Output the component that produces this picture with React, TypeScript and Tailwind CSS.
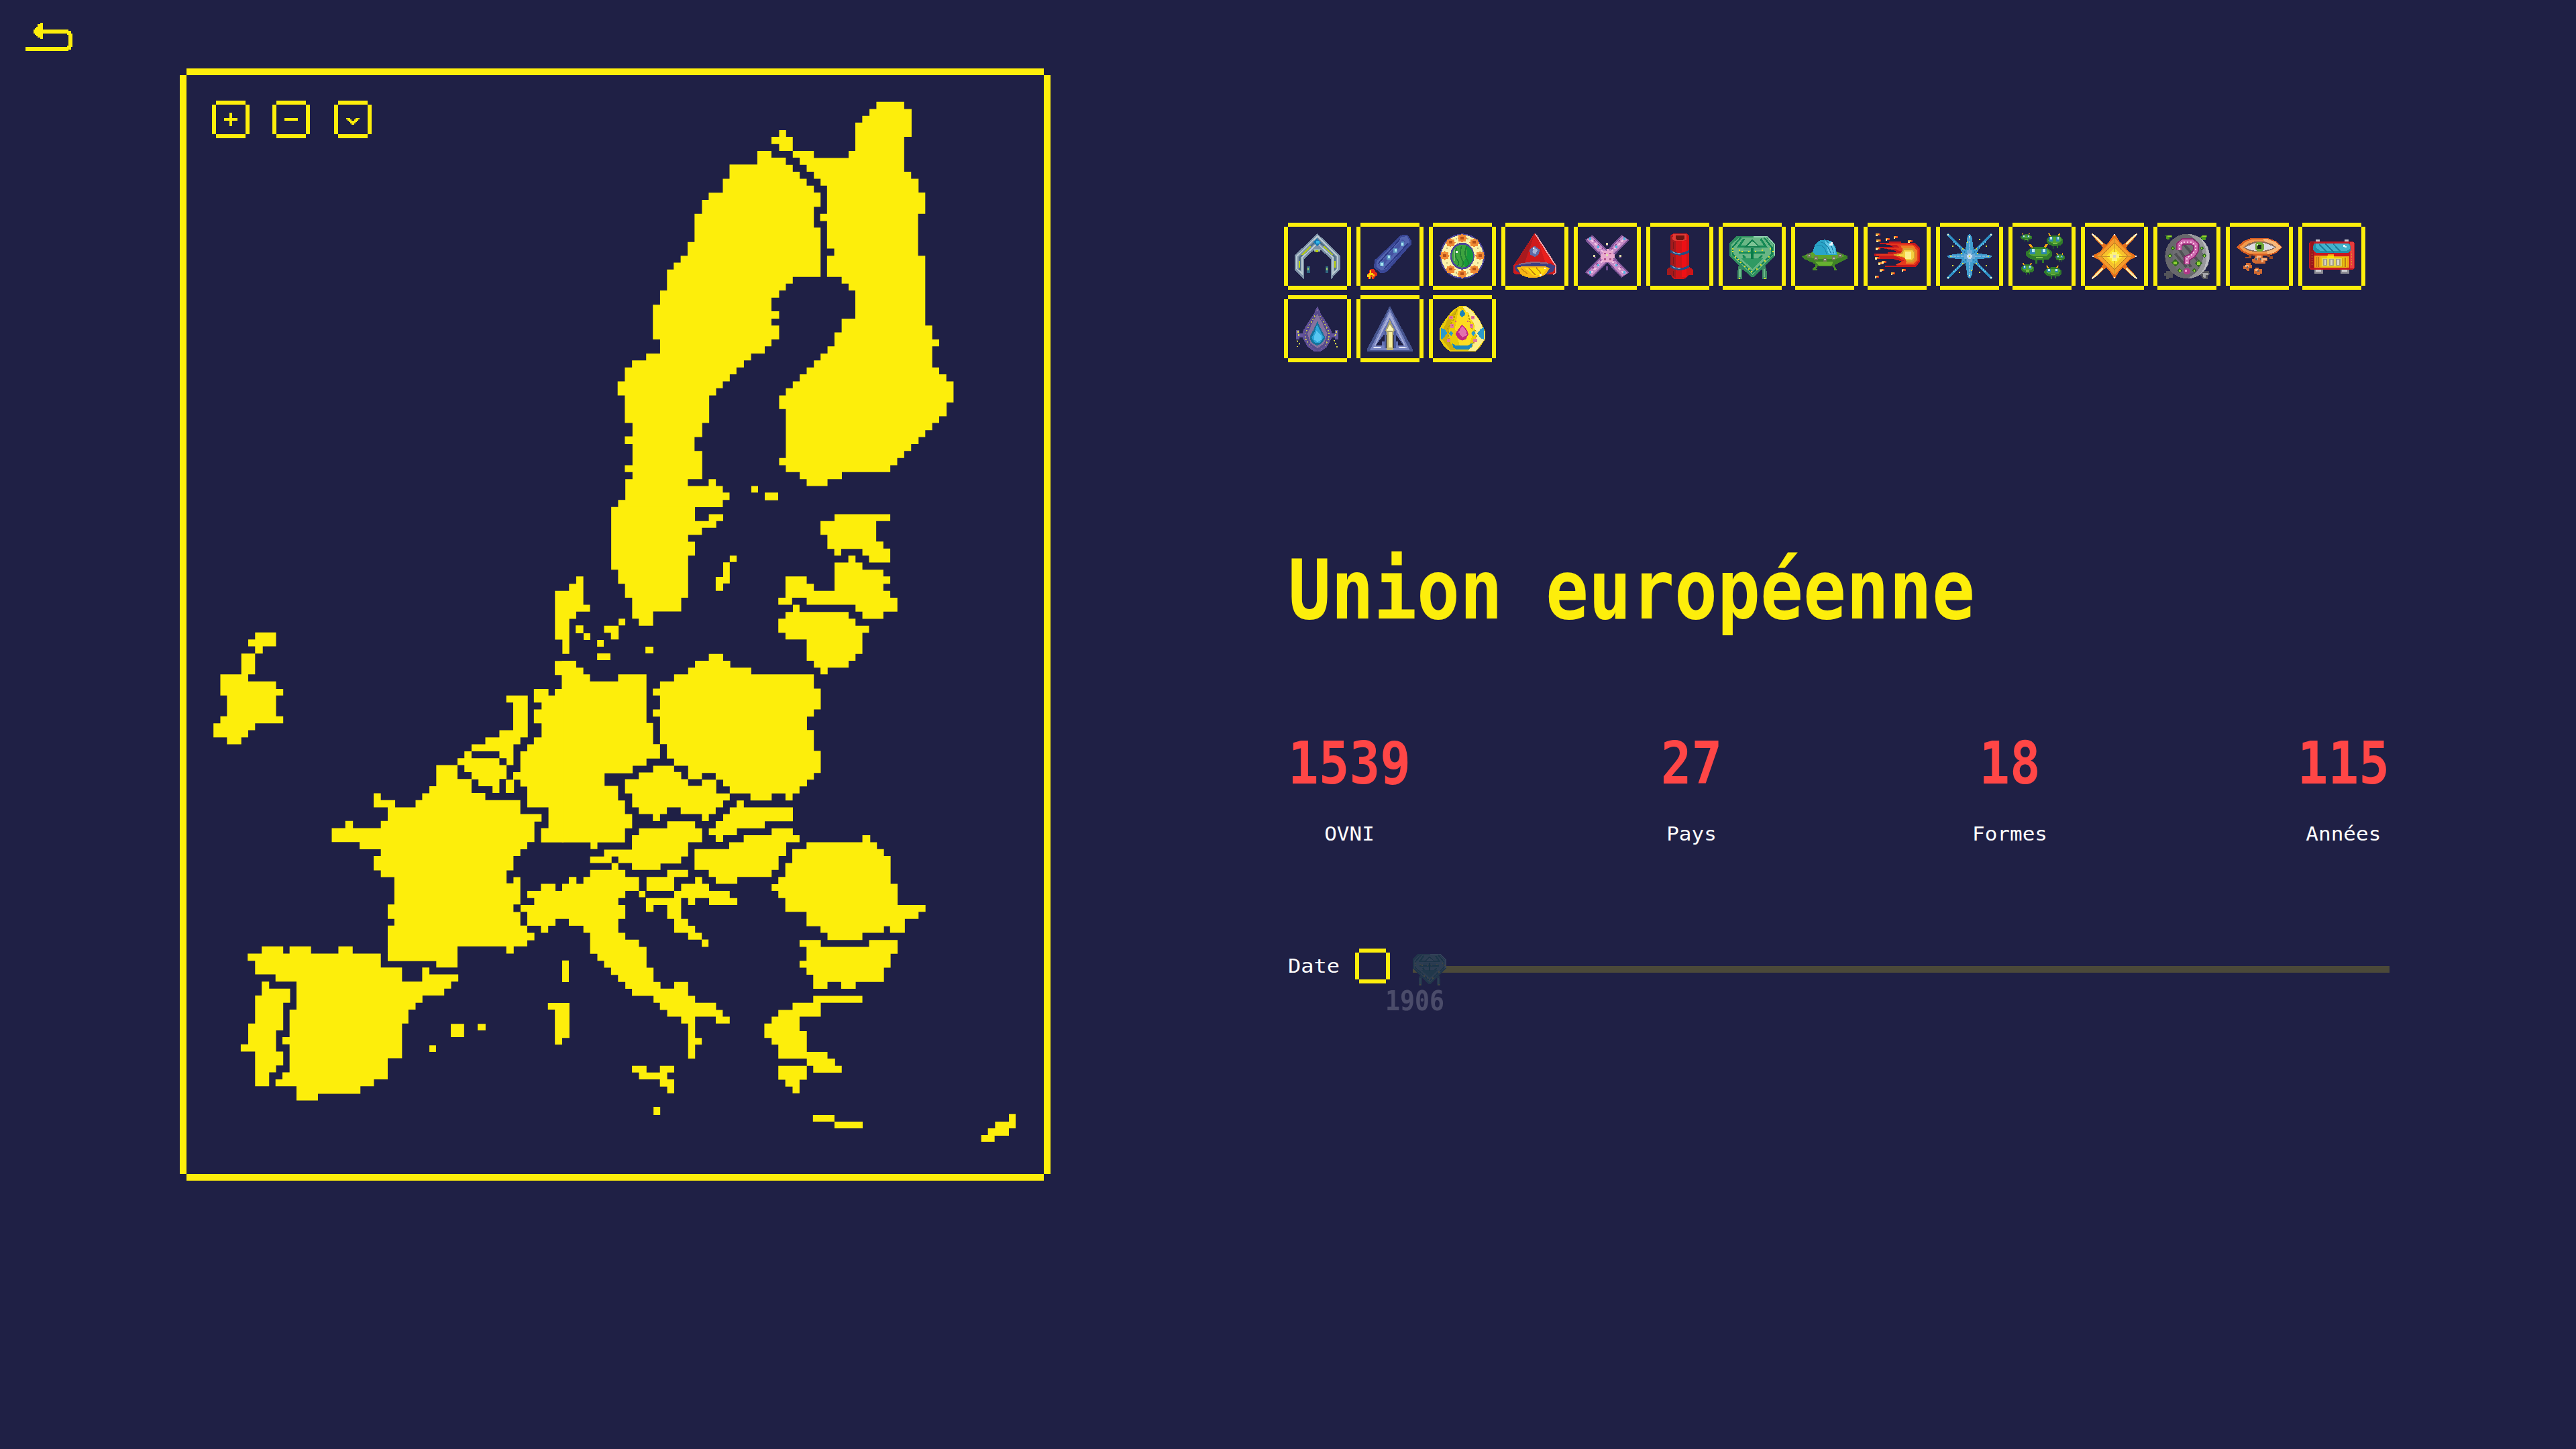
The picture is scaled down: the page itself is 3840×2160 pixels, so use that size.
import type { ReactNode } from "react";

const Y = "#fdee0b";

/* Every land mass is traced in the coordinate frame of its map section. */
const sections = [
  {
    transform: "translate(900 120) scale(.35714 .40816)",
    d: [
      "M641 257H700V282H760V308H789V333H818V359H847V384H877V409H905V461H877V537H905V717H789V742H760V767H732V793H700V843H732V870H700V895H732V946H700V971H672V997H615V1022H585V1048H554V1073H526V1099H497V1124H469V1150H440V1251H411V1302H379V1353H411V1456H351V1481H438V1456H468V1481H497V1505H525V1532H497V1558H379V1564H60V1532H90V1456H120V1430H88V1405H120V1328H88V1300H120V1251H88V1150H58V1099H88V1048H118V1022H177V997H235V946H205V819H235V767H264V690H292V665H321V640H350V590H379V487H410V436H438V410H497V359H525V307H641Z",
      "M732 181H761V206H789V257H732V232H700V206H732Z",
      "M789 257H877V283H1022V257H1050V154H1079V129H1109V104H1138V78H1254V104H1285V206H1254V333H1283V359H1314V409H1342V487H1312V640H1342V895H1371V946H1400V971H1371V1048H1400V1073H1430V1099H1460V1176H1431V1226H1400V1251H1371V1277H1342V1302H1314V1328H1283V1353H1254V1379H1225V1405H1196V1430H994V1456H934V1481H847V1456H818V1430H760V1405H732V1379H760V1200H732V1150H760V1124H789V1099H818V1073H847V1048H877V1022H905V997H934V971H963V920H993V870H1050V767H1022V742H993V717H932V640H962V614H932V513H903V487H932V384H905V359H877V333H847V308H818V282H789Z",
      "M616 1481h28v24h-28ZM672 1505h56v28h-56Z",
    ],
  },
  {
    transform: "translate(800 700) scale(.39541 .35714)",
    d: [
      "M281 156H597V215H649V186H703V215H677V243H623V272H571V301H597V359H571V535H545V592H439V652H385V622H360V535H333V477H307V418H281Z",
      "M728 359H754V386H728ZM703 387H728V475H703V506H675V448H703Z",
      "M1123 186H1333V215H1280V300H1307V330H1333V388H1253V359H1228V331H1148V359H1122V331H1096V272H1070V215H1123Z",
      "M1175 359H1202V388H1228V418H1307V446H1333V477H1307V506H1333V535H1360V593H1307V623H1228V593H1202V564H1018V535H963V564H911V535H938V446H1018V477H1045V506H1123V388H1175Z",
      "M966 564H991V594H1176V622H1202V652H1253V681H1228V769H1202V798H1176V827H1097V855H1070V827H1045V798H1018V709H938V681H911V622H938V594H966Z",
      "M149 446H176V564H201V593H149V623H123V769H97V710H69V506H122V477H149Z",
      "M147 650h29v33h-29ZM177 683h25v28h-25ZM228 711h25v28h-25ZM228 767h50v28h-50ZM309 622h25v28h-25ZM254 652H309V709H280V681H254ZM410 739h30v28h-30Z",
      "M95 798H149V827H176V855H201V884H307V855H414V1058H439V1146H465V1206H414V1236H362V1268H256V1320H307V1381H333V1438H360V1497H333V1556H229V1584H203V1556H95Z",
      "M649 769H703V798H730V827H809V855H1045V914H1071V1001H1045V1031H1019V1087H1045V1174H1071V1266H1045V1294H1019V1322H991V1352H965V1381H938V1352H886V1381H806V1352H728V1322H703V1294H675V1266H623V1292H571V1236H518V1206H491V1146H465V1031H438V1001H465V943H438V914H465V884H518V855H571V827H597V798H649Z",
      "M439 1236H518V1262H545V1292H571V1320H623V1294H677V1352H728V1381H703V1410H675V1438H649V1467H623V1438H543V1410H491V1438H465V1467H438V1438H385V1410H360V1352H333V1292H385V1264H439Z",
      "M754 1381H781V1410H966V1468H860V1497H755V1526H703V1554H675V1526H649V1497H675V1467H703V1438H728V1410H754Z",
    ],
  },
  {
    transform: "translate(740 1140) scale(.43367 .36990)",
    d: [
      "M587 228H683V256H707V312H659V370H635V398H564V424H466V396H419V370H396V396H322V370H370V342H466V284H490V256H587Z",
      "M946 256H1019V284H1042V312H996V368H970V424H946V452H828V480H754V452H730V424H681V340H800V312H850V284H946Z",
      "M1258 284H1285V312H1308V340H1332V368H1355V480H1379V565H1475V593H1451V621H1404V677H1353V651H1332V677H1258V706H1138V677H1114V651H1066V593H993V537H969V508H946V481H969V452H993V396H1017V340H1066V312H1258Z",
      "M1042 706H1115V734H1281V706H1379V762H1355V818H1332V875H1235V903H1185V875H1138V903H1089V846H1066V818H1042V790H1066V734H1042Z",
      "M1089 931H1258V959H1115V1015H1042V1073H1067V1157H1138V1184H1164V1213H1187V1241H1089V1213H1067V1184H969V1128H946V1101H921V1043H946V1015H969V988H1018V959H1089Z",
      "M969 1213H1067V1269H1042V1324H1018V1297H993V1269H969Z",
      "M1088 1411h74v27h-74ZM1162 1438h97v27h-97ZM540 1379h23v32h-23Z",
      "M466 1213H516V1240H562V1213H611V1240H587V1268H611V1324H587V1297H562V1268H490V1240H466Z",
      "M396 396H419V424H443V452H490V508H443V537H419V565H443V621H419V677H443V705H490V734H516V818H540V875H564V902H611V875H659V931H683V959H755V988H778V1015H802V1043H754V1015H683V1101H706V1128H683V1184H659V1043H635V1015H587V988H562V959H540V931H466V903H443V875H418V847H394V818H370V790H347V762H322V677H299V649H249V621H203V649H178V677H153V649H106V593H83V565H130V537H106V508H153V480H203V508H226V480H249V452H275V480H299V452H322V424H396Z",
      "M587 424H659V452H611V508H516V452H587Z",
      "M683 452H707V480H731V508H802V537H828V565H731V537H683V565H659V537H635V621H659V649H683V677H706V705H659V677H611V621H587V565H540V593H514V537H611V508H635V480H683Z",
      "M706 704h23v30h-23ZM490 508h22v26h-22ZM226 789h23v87h-23Z",
      "M177 960H251V1101H226V1128H201V987H177Z",
    ],
  },
  {
    transform: "translate(300 900) scale(.39541 .48469)",
    d: [
      "M203 88H282V131H232V153H203V217H177V239H282V262H309V282H282V346H309V368H203V389H177V411H151V432H97V411H46V368H72V346H97V282H72V217H151V153H203V131H177V110H203Z",
      "M1150 282H1231V411H1203V432H1177V496H1151V475H1124V454H1019V432H1071V411H1124V389H1176V304H1150Z",
      "M992 454H1019V475H1124V496H1151V539H1124V582H1098V561H1045V540H1019V518H992V496H966V475H992ZM1148 541h31v41h-31Z",
      "M1333 176H1366V734H1281V690H1309V626H1229V562H1203V541H1176V518H1203V454H1229V432H1254V411H1283V368H1254V325H1283V304H1254V262H1309V282H1333V262H1360V219H1333Z",
      "M886 496H966V539H1019V582H1071V604H1203V647H1283V670H1256V733H1229V755H1203V776H1177V820H1151V860H1177V841H1203V925H1177V948H1203V990H1229V1012H1256V1035H1229V1054H1178V1076H1150V1054H966V1119H886V1099H703V990H728V969H703V925H728V841H677V820H650V776H677V755H597V733H492V690H543V668H572V690H677V668H703V626H650V583H677V604H731V626H808V604H833V583H860V561H886Z",
      "M228 1054H309V1076H333V1054H414V1076H517V1054H571V1076H677V1119H757V1162H833V1119H860V1140H969V1162H942V1184H916V1205H834V1227H808V1248H781V1291H757V1398H703V1463H651V1484H600V1507H440V1528H359V1484H280V1463H306V1441H333V1355H306V1333H333V1248H359V1162H280V1140H203V1098H175V1076H228Z",
      "M228 1162H256V1184H335V1227H309V1312H282V1377H309V1420H282V1441H256V1484H203V1377H149V1355H177V1291H203V1205H228Z",
      "M941 1292h50v41h-50ZM1042 1292h30v20h-30ZM860 1358h25v20h-25Z",
    ],
  },
  {
    transform: "translate(1400 1640) scale(.33333)",
    d: ["M312 62H342V126H312V159H248V186H188V156H218V126H250V96H312Z"],
  },
];

function EuropeMap() {
  return (
    <svg viewBox="278 112 1278 1638" className="block h-[1638px] w-[1278px]" fill={Y}>
      {sections.map((s) => (
        <g key={s.transform} transform={s.transform}>
          {s.d.map((d) => (
            <path key={d} d={d} />
          ))}
        </g>
      ))}
    </svg>
  );
}

/* Cornerless pixel frame: four offset shadows round the inner box. */
function MapButton({ d, label }: { d: string; label: string }) {
  return (
    <button
      aria-label={label}
      className="m-[6px] block size-[44px] shadow-[0_-6px_0_#fdee0b,0_6px_0_#fdee0b,-6px_0_0_#fdee0b,6px_0_0_#fdee0b]"
    >
      <svg viewBox="0 0 44 44" className="size-[44px]" fill={Y} shapeRendering="crispEdges">
        <path d={d} />
      </svg>
    </button>
  );
}

function Sprite({ w = 204, children, className = "size-[68px]" }: { w?: number; children: ReactNode; className?: string }) {
  return (
    <svg viewBox={`0 0 ${w} 204`} preserveAspectRatio="none" className={className} shapeRendering="crispEdges">
      {children}
    </svg>
  );
}

function dots(points: number[][], fill: string, w = 6, h = 6) {
  return points.map(([x, y]) => <rect key={`${x}-${y}`} x={x - w / 2} y={y - h / 2} width={w} height={h} fill={fill} />);
}

const Arch = () => (
  <Sprite w={167}>
    <path d="M83 0L166 98V162L133 204V115L96 74H70L34 115V204L0 162V98Z" fill="#7f93a8" />
    <path d="M83 12L158 102V158L140 180V108L83 44L27 108V180L8 158V102Z" fill="none" stroke="#b9cad2" strokeWidth="5" />
    <path d="M83 28L148 106V166M83 28L18 106V166" fill="none" stroke="#4f6d80" strokeWidth="6" />
    <path d="M59 58L27 96M107 58L139 96M18 122V152M148 122V152" stroke="#b8d000" strokeWidth="5" />
    <path d="M82 22L96 40L82 58L68 40Z" fill="#1579b4" />
    <path d="M78 34h12v12h-12Z" fill="#35b8ea" />
    <path d="M72 70h22v10h-22Z" fill="#9db8b0" />
    <path d="M76 76h10v8h-10Z" fill="#b8d000" />
    <path d="M44 146h12v32h-12ZM112 146h12v32h-12Z" fill="#2f6680" />
    <path d="M47 154h5v12h-5ZM115 154h5v12h-5Z" fill="#9bc46a" />
  </Sprite>
);

const Cigar = () => (
  <Sprite w={167}>
    <path d="M122 10L132 5H147L156 22L162 32V48L74 170L64 176H48L24 152L28 118L38 108Z" fill="#3a4796" />
    <path d="M126 16L146 12L156 38L70 158L52 166L34 150L36 122Z" fill="#5364b0" />
    <path d="M120 26L40 136M150 44L62 160" stroke="#2c3884" strokeWidth="5" />
    <path d="M134 30L46 148" stroke="#4453a2" strokeWidth="14" />
    {dots([[129, 47], [104, 76], [79, 106], [54, 137]], "#5b93c4", 14, 20)}
    {dots([[129, 47], [104, 76], [79, 106], [54, 137]], "#a8e4ee", 8, 12)}
    <path d="M14 160H24L38 180V186L30 192L24 204H16V196L10 204H2V176H8V164Z" fill="#e22a14" />
    <path d="M10 166h5v10h7v8h6v8h-5v8h-4v-14h-6v18h-6v-8H0v-12h8Z" fill="#fbd20c" />
  </Sprite>
);

const Ring = () => (
  <Sprite w={167}>
    <ellipse cx="83" cy="102" rx="82" ry="101" fill="#4d469a" />
    <ellipse cx="83" cy="102" rx="77" ry="95" fill="#fbf2a9" />
    {[[83, 20], [127, 40], [40, 40], [18, 98], [148, 98], [40, 160], [127, 160], [83, 180]].map(([x, y]) => (
      <g key={`${x}-${y}`}>
        <path d={`M${x} ${y - 19}l6 6h8v10l5 4-5 6v9h-8l-6 5-6-5h-8v-9l-5-6 5-4v-10h8Z`} fill="#f08a34" />
        <path d={`M${x - 6} ${y - 6}h12v12h-12Z`} fill="#b4501a" />
      </g>
    ))}
    {dots([[62, 24], [104, 24], [140, 66], [26, 66], [26, 132], [140, 132], [62, 176], [104, 176]], "#c3b77a", 5, 8)}
    <ellipse cx="83" cy="101" rx="44" ry="60" fill="#4d469a" />
    <ellipse cx="83" cy="101" rx="38" ry="51" fill="#3da33e" />
    <path d="M95 52q12 40 0 60t0 38q28-14 28-50t-28-48Z" fill="#16993b" />
    <path d="M62 66q-10 30 2 50t0 30M80 56q-8 40 2 60t-2 34M98 56q-10 40 2 60t-2 34" fill="none" stroke="#1d7d34" strokeWidth="4" />
    <path d="M54 72v50" stroke="#7dbb6c" strokeWidth="6" />
    {dots([[62, 82]], "#fff", 7, 9)}
  </Sprite>
);

const Cone = () => (
  <Sprite w={167}>
    <path d="M82 0L162 146V176L150 184H14L4 174V146Z" fill="#cf1a1c" />
    <path d="M82 6L64 70L44 138H8Z" fill="#a81a1e" />
    <path d="M98 40L122 132H150Z" fill="#ea1f1c" />
    <path d="M85 2L160 144" stroke="#f2a2a8" strokeWidth="5" />
    <path d="M8 146L30 136L82 132L140 134L160 148L150 170L128 182H40L14 168Z" fill="#3e3f82" />
    <path d="M24 138L82 128L132 134" fill="none" stroke="#8a6a84" strokeWidth="6" />
    <path d="M160 146V176L150 184" fill="none" stroke="#ef9aa0" strokeWidth="5" />
    <path d="M18 152L44 146H120L138 156L122 184L106 194L80 199L54 196L34 186Z" fill="#f9b615" />
    <path d="M44 152H120L130 158L112 182L80 190Z" fill="#ffd90c" />
    <path d="M34 158l22 22M60 154l26 32M88 152l18 26" stroke="#c9860f" strokeWidth="4" />
    <path d="M82 56L102 72L98 92L84 106L66 94L64 72Z" fill="#5d6ca8" />
    <path d="M80 62L94 74L86 94L74 84Z" fill="#a7b3d6" />
    {dots([[120, 156], [104, 186], [78, 66]], "#fff", 6, 7)}
  </Sprite>
);

const Cross = () => (
  <Sprite w={167}>
    <path d="M16 18L150 186M150 18L16 186" stroke="#7d5598" strokeWidth="36" />
    <path d="M18 20L148 184M148 20L18 184" stroke="#c78dc7" strokeWidth="24" />
    <path d="M24 28L142 176M142 28L24 176" stroke="#f0c4e4" strokeWidth="7" strokeDasharray="12 8" />
    <path d="M36 30L146 168M130 30L20 168" stroke="#8e3f8e" strokeWidth="4" strokeDasharray="8 14" />
    <path d="M66 78h14v-8h12v8h12v16h6v18h-8v16H66v-14h-8V92h8Z" fill="#e9a9cf" />
    <path d="M70 86h8v8h-8ZM90 86h8v8h-8ZM70 112h8v8h-8ZM90 112h8v8h-8Z" fill="#b3568f" />
    {dots([[20, 24], [146, 24], [20, 174], [146, 174], [50, 60], [116, 60], [50, 142], [116, 142]], "#4db6e4", 8, 10)}
    {dots([[83, 98], [83, 46], [36, 100], [132, 100]], "#e2dca8", 8, 8)}
    {dots([[83, 54], [83, 152], [83, 160], [130, 108], [38, 108], [52, 86], [114, 86]], "#6a4a8c", 8, 8)}
  </Sprite>
);

const Tube = () => (
  <Sprite w={167}>
    <path d="M50 8L60 0H108L117 10V148L132 162V186H118L100 204H62L50 186H36V160L50 148Z" fill="#d01417" />
    <path d="M50 12H68V200L50 186H36V160L50 148Z" fill="#a31a1d" />
    <path d="M92 34H108V196H92Z" fill="#ee1015" />
    <path d="M60 4H108V28L96 34H68L56 26Z" fill="#e03a34" />
    <path d="M68 10H100V26L92 30H76L68 26Z" fill="#6d1511" />
    <path d="M50 74Q84 100 117 74V86Q84 110 50 86Z" fill="#2b4a7e" />
    <path d="M50 140Q84 166 117 142V154Q84 176 50 154Z" fill="#2b4a7e" />
    <path d="M56 82Q70 92 86 90M56 148Q70 158 86 156" fill="none" stroke="#6f9bbd" strokeWidth="4" />
    <path d="M60 40v30M60 104v34M60 168v20" stroke="#7a1618" strokeWidth="4" />
  </Sprite>
);

const Gem = ({ className }: { className?: string }) => (
  <Sprite className={className}>
    <path d="M40 148h22v8l-6 8v40H36v-30ZM140 148h22l6 26v30h-20v-40l-8-8Z" fill="#3d8a63" />
    <path d="M42 160h8v36h-8ZM152 160h8v36h-8Z" fill="#6cb98a" />
    <path d="M40 12H168L204 48V102L112 194H96L0 102V42L30 12Z" fill="#2f8c5e" />
    <path d="M44 18H162L196 50V98L104 186L8 98V50Z" fill="#69b685" />
    <path d="M52 18L14 62V94L104 176L190 94V62L154 18" fill="none" stroke="#128453" strokeWidth="7" />
    <path d="M66 24L42 58H162L140 24M42 84H160M102 66V108M60 98L102 146L146 98" fill="none" stroke="#158a56" strokeWidth="9" />
    <path d="M102 30L72 60H134Z" fill="#7cc394" stroke="#0f7d4c" strokeWidth="5" />
    <path d="M108 14H168L200 48V98" fill="none" stroke="#93d3b2" strokeWidth="5" />
    <path d="M54 112H150L104 160Z" fill="#2f9a63" />
    <path d="M64 64h80v10H64Z" fill="#58a87c" />
    <path d="M96 66h12v48H96Z" fill="#087c48" />
    {dots([[15, 69], [15, 81], [45, 75], [57, 81], [87, 81], [117, 81], [147, 75], [182, 69], [195, 81], [27, 105], [39, 117], [51, 129], [69, 147], [87, 159], [99, 171], [123, 159], [141, 141], [159, 123], [177, 105], [45, 200], [159, 200]], "#e6e426")}
  </Sprite>
);

const Saucer = () => (
  <Sprite>
    <path d="M60 138l14 6-12 14h8v8H48v-10l12-8ZM142 138l-10 6 12 12v10h12v-6l-8-10Z" fill="#4b8f26" />
    <path d="M0 102L40 86L60 78H150L168 86L204 100V112L160 134L140 146H72L46 130L10 114Z" fill="#3f8226" />
    <path d="M12 100L50 84H160L192 102L150 114H60Z" fill="#5ba52b" />
    <path d="M60 126H140L132 144H76Z" fill="#66b030" />
    <path d="M48 84L60 48L78 32L102 28L132 34L150 60L158 96H60Z" fill="#2aa5c8" />
    <path d="M102 32L130 38L146 62L152 92H120Z" fill="#5cc4e4" />
    <path d="M66 54Q98 42 112 94M84 38Q116 46 132 92M108 32Q136 50 142 90" fill="none" stroke="#1f86ac" strokeWidth="4" />
    {dots([[33, 99], [63, 111], [103, 117], [143, 111], [171, 99]], "#6f7a52", 16, 16)}
    {dots([[33, 99], [63, 111], [103, 117], [143, 111], [171, 99]], "#b9b3bd", 8, 8)}
    {dots([[132, 42], [126, 48], [134, 50]], "#eefaff", 9, 9)}
  </Sprite>
);

const Fireball = () => (
  <Sprite>
    <path d="M24 42H66V36H120V42H180L204 66V126L186 150H48V144H96L126 126L84 114H20V102H0V90H60V84H96V78L36 66H18V60H84L60 48H24Z" fill="#c5181d" />
    <path d="M54 44H130L176 50L198 72V122L180 142H90L132 122L90 98H10V92H80L126 84L90 68H54L110 62L100 52H54Z" fill="#e63a1d" />
    <path d="M116 54H172L192 76V118L176 134H140L146 118L120 100L136 84Z" fill="#ee7f25" />
    <path d="M80 96L120 88L130 66H170L184 84V112L170 128H146L134 108Z" fill="#d7a02f" />
    <path d="M132 76H172L178 90V108L168 120H146L128 104L100 98L128 90Z" fill="#f4d03e" />
    <path d="M138 80h28v34h-28Z" fill="#fcf08c" />
    {[[6, 0], [10, 28], [50, 20], [86, 12], [6, 62], [4, 104], [18, 128], [34, 122], [24, 160], [74, 174], [122, 158], [2, 188], [150, 30]].map(([x, y]) => (
      <g key={`${x}-${y}`}>
        <rect x={x + 8} y={y} width="12" height="9" fill="#e23a1c" />
        <rect x={x} y={y} width="14" height="7" fill="#f9a32c" />
        <rect x={x} y={y + 5} width="8" height="7" fill="#fdeaa2" />
      </g>
    ))}
  </Sprite>
);

const Flake = () => (
  <Sprite>
    <path d="M2 2L202 202M202 2L2 202" stroke="#2f8fc4" strokeWidth="9" />
    <path d="M30 36L80 80M174 36L124 80M30 172L80 124M174 172L124 124" stroke="#5cc6ee" strokeWidth="7" strokeDasharray="6 5" />
    <path d="M102 0L112 14L120 72L150 60L134 88L192 96L204 102L192 110L134 116L150 146L120 132L112 190L102 204L92 190L84 132L54 146L70 116L12 110L0 102L12 96L70 88L54 60L84 72L92 14Z" fill="#3f9dd0" />
    <path d="M102 16V188M14 102H190" stroke="#7bb2dc" strokeWidth="8" strokeDasharray="12 4" />
    <path d="M60 66L144 138M144 66L60 138" stroke="#2676ac" strokeWidth="5" strokeDasharray="6 5" />
    <path d="M90 76h24v14h12v24h-12v14H90v-14H78V90h12Z" fill="#6aa9d6" />
    <path d="M96 90h12v24H96ZM90 96h24v12H90Z" fill="#c8dcec" />
    {dots([[102, 102], [58, 27], [146, 27], [27, 58], [177, 58], [27, 144], [177, 144], [58, 174], [146, 174], [72, 69], [132, 69], [72, 135], [132, 135], [18, 102], [186, 102], [66, 90], [138, 90], [93, 39], [111, 165]], "#d9dc3c")}
    {dots([[6, 6], [198, 6], [6, 198], [198, 198], [102, 15], [102, 189]], "#f6f4c4", 7, 7)}
  </Sprite>
);

function Alien({ x, y, w, h }: { x: number; y: number; w: number; h: number }) {
  return (
    <g transform={`translate(${x} ${y}) scale(${w / 80} ${h / 66})`}>
      <path d="M8 0h8l6 12h-8ZM66 0h-8l-6 12h8Z" fill="#f3a712" />
      <path d="M14 14L30 8H52L66 14L78 26V40L66 52H54V64H48V54H34V66H28V54L10 48L0 36V26Z" fill="#2f7a2b" />
      <path d="M18 16H64L72 28L62 40H20L8 32Z" fill="#51a334" />
      <path d="M12 16h16v18H12ZM46 16h16v18H46Z" fill="#2a88ac" />
      <path d="M18 16h8v10h-8ZM50 16h8v10h-8Z" fill="#bfeaf2" />
      <path d="M30 42h20v5H30Z" fill="#7cc046" />
    </g>
  );
}

const Aliens = () => (
  <Sprite>
    <Alien x={6} y={0} w={52} h={36} />
    <Alien x={122} y={0} w={76} h={68} />
    <Alien x={30} y={48} w={120} h={88} />
    <Alien x={162} y={88} w={42} h={40} />
    <Alien x={8} y={132} w={60} h={54} />
    <Alien x={112} y={144} w={80} h={60} />
  </Sprite>
);

const Star = () => (
  <Sprite>
    <path d="M0 0L14 6L78 64L64 78L6 14ZM204 0L190 6L126 64L140 78L198 14ZM0 204L14 198L78 140L64 126L6 190ZM204 204L190 198L126 140L140 126L198 190Z" fill="#e3701d" />
    <path d="M2 2L50 48M202 2L154 48M2 202L50 156M202 202L154 156" stroke="#fce9a4" strokeWidth="8" />
    <path d="M102 0L124 34L168 82L204 102L168 120L124 168L102 204L80 168L36 120L0 102L36 82L80 34Z" fill="#e8711c" />
    <path d="M102 20L180 102L102 184L24 102Z" fill="#f49a2a" />
    <path d="M102 42L162 102L102 162L42 102Z" fill="#f8c22c" stroke="#b06a1a" strokeWidth="4" />
    <path d="M102 64L140 102L102 140L64 102Z" fill="#fbe52e" />
    <path d="M102 20V184M22 102H182" stroke="#c58d2a" strokeWidth="3" />
    <path d="M90 84h24v10h8v18h-8v10H90v-10h-8V94h8Z" fill="#fdf37a" />
    <path d="M96 96h12v12H96Z" fill="#d8ccc8" />
    {dots([[6, 6], [198, 6], [6, 198], [198, 198], [102, 6], [102, 198], [6, 102], [198, 102]], "#fff", 8, 8)}
  </Sprite>
);

const Planet = () => (
  <Sprite>
    <path d="M10 168h30v30h-20v6H8v-14H0v-14h10ZM162 168h38l4 14-8 8v14h-20l-14-16Z" fill="#54545a" />
    <path d="M172 176h26v10h-12v12h-10Z" fill="#a6a6aa" />
    <path d="M6 8h30v10H24v10H12ZM194 8h-24l-14 12h12v10h16Z" fill="#4c9a22" />
    <path d="M16 8h16v6H16ZM172 10h18v6h-18Z" fill="#9ad42c" />
    <circle cx="104" cy="102" r="100" fill="#68686c" />
    <path d="M104 2a100 100 0 0 1 0 200q70-40 70-100T104 2Z" fill="#98989c" />
    <path d="M150 14a100 100 0 0 1 6 172q34-30 34-84t-40-88Z" fill="#bcbcc0" />
    <path d="M60 30h80l30 44v60l-40 44H70l-30-40V70Z" fill="#6e6e72" />
    <path d="M60 60l60 90M50 90l50 60M90 50l60 70" stroke="#505054" strokeWidth="12" />
    {[[39, 66, 7], [26, 100, 8], [50, 132, 14], [70, 166, 8], [154, 134, 14], [180, 100, 8], [168, 66, 6], [135, 166, 7]].map(([x, y, r]) => (
      <g key={`${x}-${y}`}>
        <path d={`M${x} ${y - r - 3}l${r + 3} ${r + 3}-${r + 3} ${r + 3}-${r + 3}-${r + 3}Z`} fill="#2f6a1e" />
        <path d={`M${x - r / 2} ${y - r / 2}h${r}v${r}h-${r}Z`} fill="#8fd034" />
      </g>
    ))}
    <path d="M68 76V50L84 36H124L142 50V76L128 98L102 112V138" fill="none" stroke="#8c2a70" strokeWidth="28" />
    <path d="M68 76V50L84 36H124L142 50V76L128 98L102 112V138" fill="none" stroke="#d069ae" strokeWidth="17" />
    <path d="M68 72V50L84 38H124L140 52V76L126 94L102 108V134" fill="none" stroke="#f6cbe6" strokeWidth="6" strokeDasharray="7 8" />
    <path d="M96 156h14l6 8v12l-8 8H96l-8-8v-12Z" fill="#b03a88" />
    {dots([[98, 166]], "#f0a0d0", 8, 8)}
  </Sprite>
);

const Eye = () => (
  <Sprite>
    <path d="M0 62L30 34L66 20H138L176 34L204 62L176 88L150 98H54L30 86Z" fill="#d95f22" />
    <path d="M14 60L40 38L72 26H136L172 40L196 62L168 80L140 90H62L34 80Z" fill="#f39a4c" />
    <path d="M120 24H138L174 38L202 62L172 84L140 94Z" fill="#f8b878" />
    <path d="M30 62L56 44L84 36H124L156 46L178 62L150 76L122 82H80L52 76Z" fill="#8a6a58" />
    <path d="M36 62L70 48L84 42H120L146 50L172 62L146 72L120 78H84L58 72Z" fill="#dcdbe2" />
    <path d="M92 38h20l10 10v24l-10 8H92l-8-8V48Z" fill="#6fa83a" />
    <path d="M94 50h16v20H94Z" fill="#15251a" />
    {dots([[94, 52]], "#e8f4e0", 6, 6)}
    <path d="M54 92h22v8h-10v10H40v-4h14ZM138 92h12v10h12v12h-14v-8h-10Z" fill="#a04a22" />
    <path d="M84 98h34v10h20v16h-10v12H84l-14-10v-12h8ZM42 132h20v10h8v14H58v12H48l-8-10H30v-14h12ZM84 152h16v8h14v20h-8v6H90v-6H78v-20h6Z" fill="#d26a30" />
    <path d="M90 100h22v8H96v12H84v-12h6ZM38 142h16v8H38ZM84 160h12v8H84ZM112 110h22v10h-14v8h-8Z" fill="#f8b480" />
    {dots([[88, 116], [108, 116], [48, 152], [98, 168]], "#596272", 8, 8)}
  </Sprite>
);

const Case = () => (
  <Sprite>
    <path d="M30 26h18v14H30ZM158 26h18v14h-18Z" fill="#c8c8d0" />
    <path d="M24 158h38v22H24ZM142 158h38v22h-38Z" fill="#8c8c94" />
    <path d="M30 162h24v8H30ZM148 162h24v8h-24Z" fill="#cfcfd4" />
    <path d="M8 36H196L204 44V154L196 162H8L0 154V44Z" fill="#c91820" />
    <path d="M6 40h16v116H6Z" fill="#97151c" />
    <path d="M182 38h18v118h-18Z" fill="#e83c3c" />
    <path d="M26 44H180L186 56V78L176 86H30L18 72V56Z" fill="#2390aa" />
    <path d="M30 46H176L182 56V70L170 78H50L30 62Z" fill="#42b2cc" />
    <path d="M46 50L80 84M74 46L112 84M108 46L140 80" stroke="#1b7d9c" strokeWidth="6" />
    {dots([[158, 56], [164, 60]], "#dff6fb", 8, 8)}
    <path d="M24 98H84V94H112V102H180V154H24Z" fill="#f09c1a" />
    <path d="M50 102H84L96 98L110 106H172V152H50Z" fill="#e8c410" />
    <path d="M82 98h28v12H82Z" fill="#fbe000" />
    <path d="M58 112h88v36H58Z" fill="#e6d850" />
    <path d="M62 114h20v30H62ZM91 114h20v30H91ZM120 114h20v30h-20Z" fill="#a49c84" />
    <path d="M68 118h8v22h-8ZM97 118h8v22h-8ZM126 118h8v22h-8Z" fill="#dcd8cc" />
    <path d="M34 104v46M42 104v46M152 112v38M162 108v42" stroke="#c07814" strokeWidth="4" />
    <path d="M14 80v62M190 80v62" stroke="#e0a020" strokeWidth="4" strokeDasharray="5 6" />
  </Sprite>
);

const Drop = () => (
  <Sprite w={167}>
    <path d="M6 108h12v16h16v18H16v8H6ZM160 108h-12v16h-18v18h18v8h12Z" fill="#64569c" />
    <path d="M83 0L96 36L118 76L134 112V146L118 184L96 203H70L48 184L30 146V112L48 76L70 36Z" fill="#5f4f96" />
    <path d="M83 12L94 44L114 82L126 116V144L112 176L94 194H74L54 176L40 144V116L52 82L72 44Z" fill="#84729f" />
    <path d="M83 24L60 76L42 124L54 170L84 196L112 170L124 124L104 72L83 24" fill="none" stroke="#574b8c" strokeWidth="9" />
    <path d="M74 44L58 80L38 120V144L54 176M92 44L110 80L126 118V144L112 176" fill="none" stroke="#c9c94a" strokeWidth="4" strokeDasharray="6 8" />
    <path d="M83 68L96 104L110 136V150L96 170L82 178L66 168L56 150V136L70 104Z" fill="#17719a" />
    <path d="M82 84L94 112L106 140L92 166H74L62 144L74 112Z" fill="#2ba4d8" />
    <path d="M80 112L98 134V152L84 162L72 152V134Z" fill="#58c6f2" />
    <path d="M12 112L16 140M8 154L18 168L8 184M154 112L146 140M144 152L156 186" fill="none" stroke="#d9d94a" strokeWidth="4" strokeDasharray="8 7" />
  </Sprite>
);

const Prism = () => (
  <Sprite w={167}>
    <path d="M83 0L166 192V204H0V192Z" fill="#46548e" />
    <path d="M83 14L156 198H10Z" fill="#7683c0" />
    <path d="M83 28L140 176L122 178L83 74L44 178L26 176Z" fill="#a3abd6" />
    <path d="M83 52L136 178H30Z" fill="#6573b4" />
    <path d="M60 130H106L134 176H112V160H98V190H68V160H54V176H32Z" fill="#1f2045" />
    <path d="M83 62L104 118H64Z" fill="#a5a070" />
    <path d="M83 82L98 112H70Z" fill="#fbf4b4" />
    <path d="M72 118H96V198H72Z" fill="#c2b670" />
    <path d="M79 118H90V186H79Z" fill="#f7eea0" />
    <path d="M26 182H54L48 190H20ZM112 182H138L148 190H120Z" fill="#e0e2f2" />
    <path d="M66 112V190M102 112V190" stroke="#4a5a9c" strokeWidth="6" />
  </Sprite>
);

const Egg = () => (
  <Sprite w={167}>
    <path d="M72 0H96L122 22L146 62L166 110V150L148 184L132 204H38L18 184L0 150V100L20 62L46 22Z" fill="#eacb08" />
    <path d="M72 6L34 50L10 110V150L40 198H60L30 150L38 80Z" fill="#cfae0c" />
    <path d="M84 2H98L122 26L146 66L164 112V150L132 202H104L134 150L126 80Z" fill="#fdf08a" />
    <path d="M70 12L106 30L128 100L108 176L76 190L56 100Z" fill="#fddc20" />
    <path d="M62 16L52 60L30 100L36 170M104 40L118 100L140 120L118 186" fill="none" stroke="#b8960c" strokeWidth="4" strokeDasharray="8 7" />
    <path d="M83 16L94 32L90 44L82 50L74 42V30Z" fill="#1d84b8" />
    <path d="M4 98L18 104L28 122L14 144L4 150ZM162 96L150 104L138 122L150 144L162 150ZM42 112L50 122L42 136L34 122ZM124 112L132 122L124 136L116 122Z" fill="#2b9acb" />
    <path d="M46 166L58 176H106L120 164L118 184L104 196H62L50 186Z" fill="#1c88bc" />
    <path d="M83 84L98 104L106 126L96 148L82 156L66 144L58 124L68 104Z" fill="#c2287e" />
    <path d="M83 90L98 112L100 132L84 140L68 118Z" fill="#e36fae" />
    {dots([[42, 52], [122, 52], [46, 90], [116, 90], [34, 154], [130, 154]], "#e07a9c", 13, 16)}
    {dots([[42, 50], [122, 50], [46, 88], [116, 88], [60, 70], [104, 70]], "#d6587c", 5, 6)}
  </Sprite>
);

const shapes = [Arch, Cigar, Ring, Cone, Cross, Tube, Gem, Saucer, Fireball, Flake, Aliens, Star, Planet, Eye, Case, Drop, Prism, Egg];

const stats = [
  { value: "1539", label: "OVNI" },
  { value: "27", label: "Pays" },
  { value: "18", label: "Formes" },
  { value: "115", label: "Années" },
];

export default function App() {
  return (
    <div className="h-[2160px] w-[3840px] overflow-hidden bg-[#1f2045] font-['DejaVu_Sans_Mono',monospace] text-white">
      <header className="h-[102px] pt-[34px] pl-[38px]">
        <svg viewBox="93 102 172 126" preserveAspectRatio="none" className="block h-[42px] w-[70px]" fill={Y} shapeRendering="crispEdges">
          <path d="M147 102H157V132H250V138H260V150H265V210H260V222H250V228H93V210H245V204H250V156H245V150H157V174H147V168H137V162H132V156H127V150H122V132H127V126H132V120H137V108H147Z" />
        </svg>
      </header>

      <main className="flex pl-[278px]">
        <section className="relative mt-[10px] h-[1638px] w-[1278px] shrink-0 shadow-[0_-10px_0_#fdee0b,0_10px_0_#fdee0b,-10px_0_0_#fdee0b,10px_0_0_#fdee0b]">
          <EuropeMap />
          <div className="absolute top-[38px] left-[38px] flex">
            <MapButton label="Zoom avant" d="M20 12h4v8h8v4h-8v8h-4v-8h-8v-4h8Z" />
            <div className="w-[34px]" />
            <MapButton label="Zoom arrière" d="M12 20h20v4H12Z" />
            <div className="w-[36px]" />
            <MapButton label="Réinitialiser" d="M12 20h6v2h2v2h4v-2h2v-2h6v2h-2v2h-2v2h-2v2h-2v2h-4v-2h-2v-2h-2v-2h-2v-2h-2Z" />
          </div>
        </section>

        <section className="ml-[358px] w-[1648px] pt-[230px]">
          <div className="flex flex-wrap gap-2">
            {shapes.map((Shape, i) => (
              <div
                key={i}
                className="m-[6px] flex size-[88px] items-center justify-center shadow-[0_-6px_0_#fdee0b,0_6px_0_#fdee0b,-6px_0_0_#fdee0b,6px_0_0_#fdee0b]"
              >
                <Shape />
              </div>
            ))}
          </div>

          <div className="pl-[6px]">
            <h1 className="mt-[279px] origin-center scale-y-[1.16] text-[106.3px] leading-[120px] font-bold whitespace-nowrap text-[#fdee0b]">
              Union européenne
            </h1>

            <div className="mt-[159px] flex justify-between">
              {stats.map((s) => (
                <div key={s.label} className="flex flex-col items-center">
                  <span className="scale-y-[1.155] text-[76px] leading-[80px] font-bold text-[#ff4646]">{s.value}</span>
                  <span className="mt-[45px] scale-y-90 text-[31px] leading-[40px]">{s.label}</span>
                </div>
              ))}
            </div>

            <div className="mt-[151px] flex h-[52px] items-center">
              <span className="scale-y-90 text-[32px] leading-[40px]">Date</span>
              <div className="m-[6px] ml-[29px] size-[40px] shadow-[0_-6px_0_#fdee0b,0_6px_0_#fdee0b,-6px_0_0_#fdee0b,6px_0_0_#fdee0b]" />
              <div className="relative ml-[34px] h-[52px] w-[1456px] opacity-20">
                <div className="mt-[26px] h-[10px] bg-[#fdee0b]" />
                <div className="absolute top-[5px] left-0">
                  <Gem className="size-[50px]" />
                </div>
                <span className="absolute top-[58px] left-[-41px] scale-y-[1.13] text-[36.5px] leading-[40px] font-bold">1906</span>
              </div>
            </div>
          </div>
        </section>
      </main>
    </div>
  );
}
